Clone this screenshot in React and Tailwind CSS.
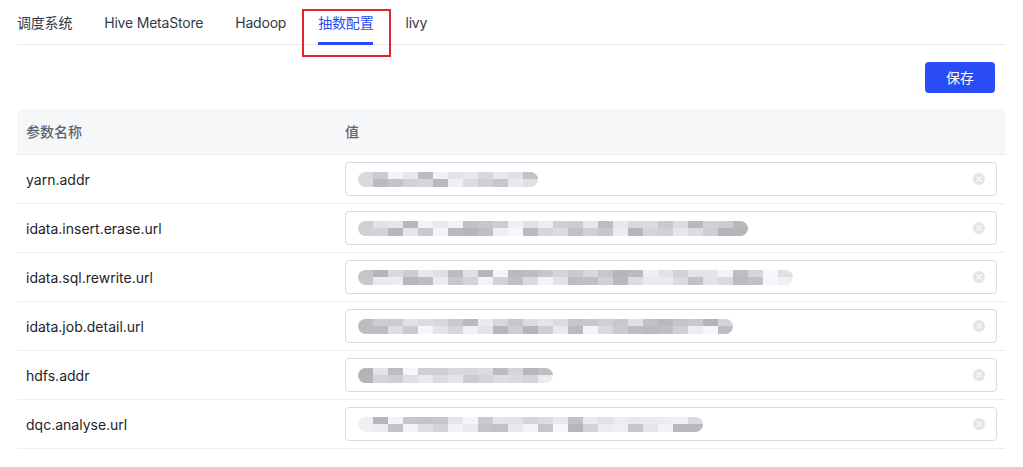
import React from 'react';

const font = { fontFamily: 'Inter, "Noto Sans CJK SC", sans-serif' };

const tabs = ['调度系统', 'Hive MetaStore', 'Hadoop', '抽数配置', 'livy'];

const rows = [
  { name: 'yarn.addr', blocks: 12 },
  { name: 'idata.insert.erase.url', blocks: 26 },
  { name: 'idata.sql.rewrite.url', blocks: 29 },
  { name: 'idata.job.detail.url', blocks: 25 },
  { name: 'hdfs.addr', blocks: 13 },
  { name: 'dqc.analyse.url', blocks: 23 },
];

// mosaic stand-in for the blurred values
const shades = (seed, n) => {
  let s = seed * 9301 + 49297;
  const out = [];
  for (let i = 0; i < n; i++) {
    s = (s * 9301 + 49297) % 233280;
    const v = 0xb4 + Math.floor((s / 233280) * 0x44);
    out.push(`rgb(${v},${v},${v + 4})`);
  }
  return out;
};

const Mosaic = ({ seed, count }) => {
  const top = shades(seed + 1, count);
  const bottom = shades(seed + 7, count);
  return (
    <div className="flex flex-col overflow-hidden rounded-full">
      <div className="flex">
        {top.map((c, i) => (
          <div key={i} className="h-[7px] w-[15px]" style={{ backgroundColor: c }} />
        ))}
      </div>
      <div className="flex">
        {bottom.map((c, i) => (
          <div key={i} className="h-[8px] w-[15px]" style={{ backgroundColor: c }} />
        ))}
      </div>
    </div>
  );
};

const ClearIcon = () => (
  <div className="flex h-[12px] w-[12px] items-center justify-center rounded-full bg-[#e3e4e8]">
    <svg width="6" height="6" viewBox="0 0 6 6">
      <path d="M1 1L5 5M5 1L1 5" stroke="#fff" strokeWidth="1.2" strokeLinecap="round" />
    </svg>
  </div>
);

export default function App() {
  return (
    <div className="min-h-screen bg-white pl-[17px] pr-[18px]" style={font}>
      {/* Tabs */}
      <div className="flex h-[45px] gap-8 border-b border-[#ebebeb]">
        {tabs.map((t) => {
          const active = t === '抽数配置';
          return (
            <div
              key={t}
              className={`relative flex items-center text-[14px] tracking-[-0.2px] ${active ? 'text-[#2a4cf6]' : 'text-[#333a47]'}`}
            >
              {t}
              {active && (
                <>
                  <div className="absolute bottom-[-1px] left-0 right-0 h-[3px] bg-[#2a4cf6]" />
                  <div className="absolute left-[-16px] right-[-18px] top-[9px] h-[48px] border-2 border-[#e1262c]" />
                </>
              )}
            </div>
          );
        })}
      </div>

      {/* Toolbar */}
      <div className="mt-[17px] flex justify-end pr-[10px]">
        <button className="h-[31px] w-[70px] rounded-[4px] bg-[#2a4cf6] text-[14px] text-white">保存</button>
      </div>

      {/* Table */}
      <div className="mt-[16px]">
        <div className="flex h-[46px] items-center rounded-t-[4px] border-b border-[#eceef2] bg-[#f6f7f9] text-[14px] font-medium text-[#5d6370]">
          <div className="w-[320px] px-[9px]">参数名称</div>
          <div className="flex-1 px-[8px]">值</div>
        </div>
        {rows.map((r, i) => (
          <div key={r.name} className="flex h-[49px] items-center border-b border-[#eceef2] text-[14px] text-[#1f2329]">
            <div className="w-[320px] px-[9px]">{r.name}</div>
            <div className="flex-1 px-[8px]">
              <div className="flex h-[34px] items-center justify-between rounded-[4px] border border-[#d5dbe7] pl-[12px] pr-[11px]">
                <Mosaic seed={i * 13} count={r.blocks} />
                <ClearIcon />
              </div>
            </div>
          </div>
        ))}
      </div>
    </div>
  );
}
